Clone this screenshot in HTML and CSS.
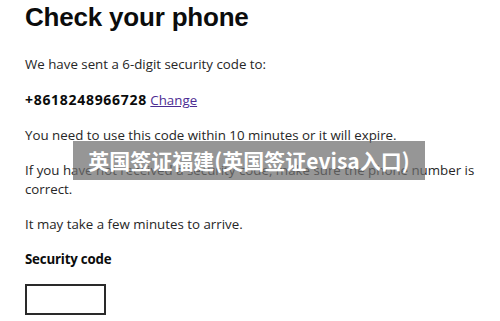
FILE: index.html
```html
<!DOCTYPE html>
<html lang="en">
<head>
<meta charset="utf-8">
<link rel="stylesheet" href="styles.css">
</head>
<body>
<main class="page">
  <h1 class="title">Check your phone</h1>
  <p class="text">We have sent a 6-digit security code to:</p>
  <p class="text"><strong class="phone">+8618248966728</strong> <a class="link" href="#">Change</a></p>
  <p class="text">You need to use this code within 10 minutes or it will expire.</p>
  <p class="text">If you have not received a security code, make sure the phone number is correct.</p>
  <p class="text">It may take a few minutes to arrive.</p>
  <label class="label" for="code">Security code</label>
  <input class="input" id="code" type="text">
  <div class="banner">英国签证福建(英国签证evisa入口)</div>
</main>
</body>
</html>
```

FILE: styles.css
```css
html, body {
  margin: 0;
  padding: 0;
  background: #ffffff;
}
body {
  width: 500px;
  height: 321px;
  overflow: hidden;
  font-family: "Open Sans", "Liberation Sans", sans-serif;
  color: #262626;
}
.page {
  position: relative;
  padding: 0 0 0 25px;
  display: flex;
  flex-direction: column;
  align-items: flex-start;
}
.title {
  margin: 0 0 21px;
  font-family: "Liberation Sans", Arial, sans-serif;
  font-size: 26px;
  line-height: 34px;
  font-weight: 700;
  color: #0b0c0c;
  letter-spacing: -0.2px;
}
.text {
  margin: 0 0 16px;
  font-size: 13.3px;
  line-height: 19px;
  width: 460px;
}
.phone {
  font-size: 14px;
  font-weight: 700;
  color: #0b0c0c;
  letter-spacing: 0.7px;
}
.link {
  color: #4c2c92;
  text-decoration: underline;
}
.label {
  font-size: 13.3px;
  line-height: 19px;
  font-weight: 700;
  color: #0b0c0c;
  letter-spacing: -0.2px;
}
.input {
  margin: 15px 0 0;
  box-sizing: border-box;
  width: 81px;
  height: 31px;
  border: 2px solid #2a2a2a;
  padding: 0;
  background: #fff;
}
.banner {
  position: absolute;
  left: 73px;
  top: 141px;
  width: 352px;
  height: 39px;
  background: rgba(110, 110, 110, 0.72);
  color: #ffffff;
  font-family: "Noto Sans CJK SC", "Noto Sans", sans-serif;
  font-weight: 700;
  font-size: 21px;
  line-height: 39px;
  text-align: center;
}
```
